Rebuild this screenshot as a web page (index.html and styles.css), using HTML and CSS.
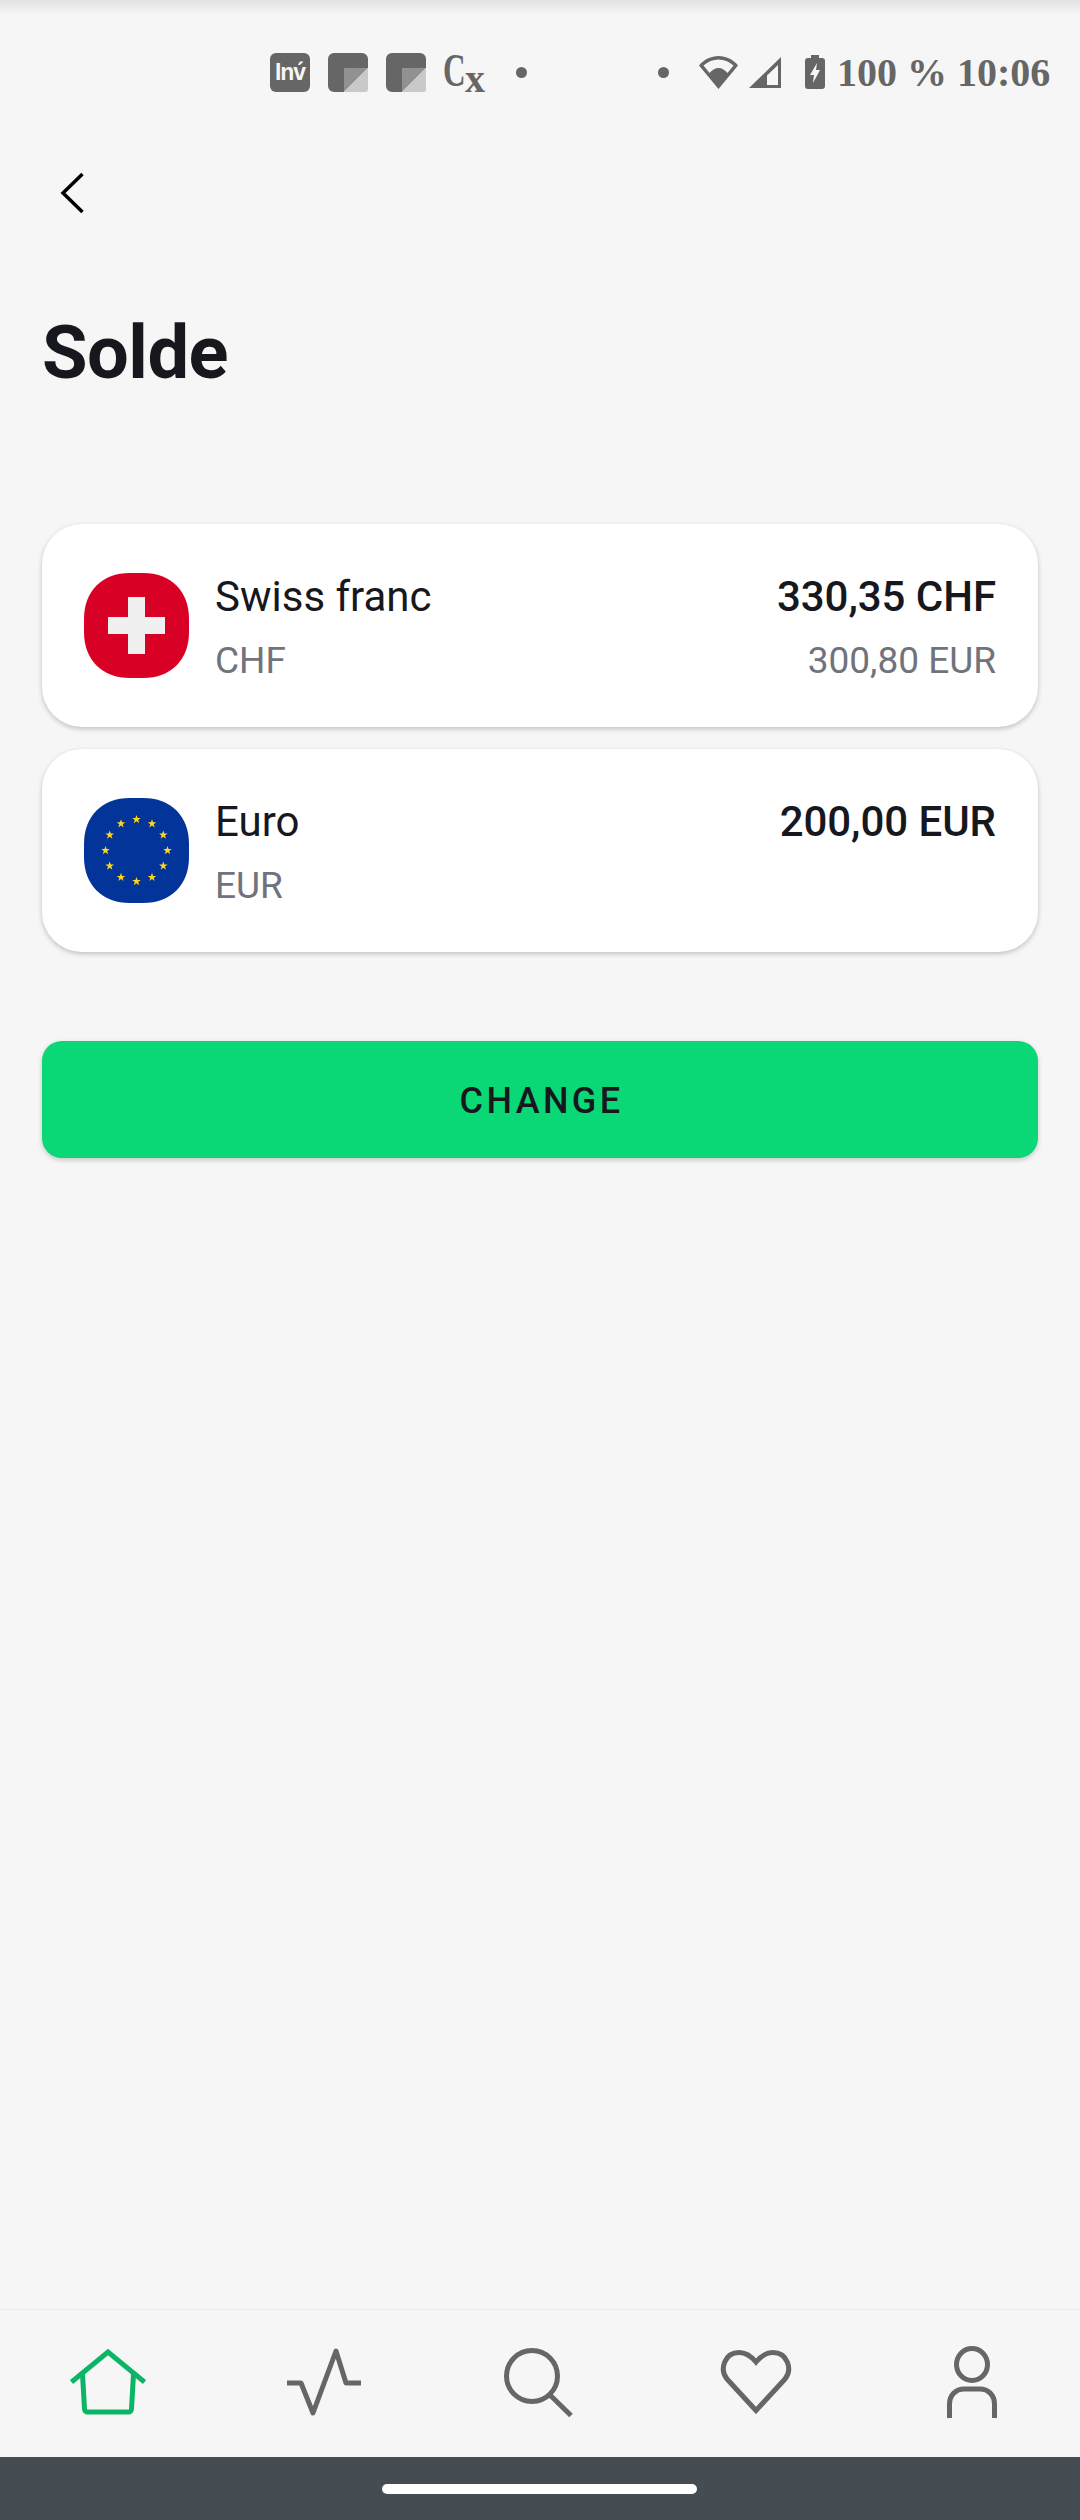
FILE: index.html

```html
<!DOCTYPE html>
<html lang="en">
<head>
<meta charset="UTF-8">
<title>Solde</title>
<meta name="viewport" content="width=device-width, initial-scale=1.0">
<link rel="stylesheet" href="styles.css">
</head>
<body>
<div class="page">
  <div class="statusbar">
    <svg class="note note-first" width="40" height="39" viewBox="0 0 40 39"><rect width="40" height="39" rx="6" fill="#666"/><text x="20" y="27" text-anchor="middle" class="inv-text">Inv́</text></svg>
    <svg class="note" width="40" height="39" viewBox="0 0 40 39"><path d="M6 0H34a6 6 0 0 1 6 6V15H19a3 3 0 0 0-3 3V39H6a6 6 0 0 1-6-6V6a6 6 0 0 1 6-6z" fill="#666"/><path d="M16 39V18a3 3 0 0 1 3-3H40L16 39z" fill="#919191"/><path d="M40 15V36a3 3 0 0 1-3 3H16z" fill="#c9c9c9"/></svg>
    <svg class="note" width="40" height="39" viewBox="0 0 40 39"><path d="M6 0H34a6 6 0 0 1 6 6V15H19a3 3 0 0 0-3 3V39H6a6 6 0 0 1-6-6V6a6 6 0 0 1 6-6z" fill="#666"/><path d="M16 39V18a3 3 0 0 1 3-3H40L16 39z" fill="#919191"/><path d="M40 15V36a3 3 0 0 1-3 3H16z" fill="#c9c9c9"/></svg>
    <span class="cx"><span class="cx-big">C</span><span class="cx-small">x</span></span>
    <span class="dot dot-left"></span>
    <span class="dot dot-right"></span>
    <svg class="wifi" width="39" height="33" viewBox="0 0 39 33"><path d="M19.500 33L0 9.500C5 3.500 12 0 19.500 0S34 3.500 39 9.500z" fill="#666"/><path d="M4.500 9.500C9 5.500 14 3.500 19.500 3.500S30 5.500 34.500 9.500L28.500 17C26 14 23 12 19.500 12S13 14 10.500 17z" fill="#f6f6f6"/></svg>
    <svg class="signal" width="32" height="31" viewBox="0 0 32 31"><path d="M32 0V31H0z" fill="#666"/><path d="M29 8V28H18V18.500z" fill="#f6f6f6"/></svg>
    <svg class="battery" width="20" height="34" viewBox="0 0 20 34"><path d="M6 0H14V3H17a3 3 0 0 1 3 3V31a3 3 0 0 1-3 3H3a3 3 0 0 1-3-3V6a3 3 0 0 1 3-3H6z" fill="#666"/><path d="M12 8L5 20H9L8 28L15 15H11z" fill="#f6f6f6"/></svg>
    <span class="status-text">100 % 10:06</span>
  </div>

  <div class="toolbar">
    <svg width="25" height="42" viewBox="0 0 25 42"><path d="M22.500 2L3 21L22.500 40" fill="none" stroke="#000" stroke-width="3.500"/></svg>
  </div>

  <div class="content">
    <h1>Solde</h1>

    <div class="card">
      <svg class="flag" width="105" height="105" viewBox="0 0 105 105">
        <path d="M46 0H59C87 0 105 18 105 46V59C105 87 87 105 59 105H46C18 105 0 87 0 59V46C0 18 18 0 46 0z" fill="#d90026"/>
        <path d="M44 24H61V44H81V61H61V81H44V61H24V44H44z" fill="#f0f0f0"/>
      </svg>
      <div class="names">
        <div class="name">Swiss franc</div>
        <div class="sub">CHF</div>
      </div>
      <div class="amounts">
        <div class="amount">330,35 CHF</div>
        <div class="sub">300,80 EUR</div>
      </div>
    </div>

    <div class="card">
      <svg class="flag" width="105" height="105" viewBox="0 0 105 105">
        <defs><polygon id="star" points="0,-4.500 1.100,-1.400 4.300,-1.400 1.700,.6 2.700,3.700 0,1.800 -2.700,3.700 -1.700,.6 -4.300,-1.400 -1.100,-1.400" fill="#ffd617"/></defs>
        <path d="M46 0H59C87 0 105 18 105 46V59C105 87 87 105 59 105H46C18 105 0 87 0 59V46C0 18 18 0 46 0z" fill="#02349a"/>
        <use href="#star" x="52.500" y="21.500"/>
        <use href="#star" x="68" y="25.700"/>
        <use href="#star" x="79.300" y="37"/>
        <use href="#star" x="83.500" y="52.500"/>
        <use href="#star" x="79.300" y="68"/>
        <use href="#star" x="68" y="79.300"/>
        <use href="#star" x="52.500" y="83.500"/>
        <use href="#star" x="37" y="79.300"/>
        <use href="#star" x="25.700" y="68"/>
        <use href="#star" x="21.500" y="52.500"/>
        <use href="#star" x="25.700" y="37"/>
        <use href="#star" x="37" y="25.700"/>
      </svg>
      <div class="names">
        <div class="name">Euro</div>
        <div class="sub">EUR</div>
      </div>
      <div class="amounts">
        <div class="amount">200,00 EUR</div>
      </div>
    </div>

    <button class="change">CHANGE</button>
  </div>

  <div class="tabbar">
    <div class="tab">
      <svg width="76" height="66" viewBox="0 0 76 66" fill="none" stroke="#0bb565" stroke-width="5"><path d="M1.500 33L38 3L74.500 33"/><path d="M12.500 25L14.500 60a3 3 0 0 0 3 3H58.500a3 3 0 0 0 3-3L63.500 25" stroke-linejoin="round"/></svg>
    </div>
    <div class="tab">
      <svg width="74" height="68" viewBox="0 0 74 68" fill="none" stroke="#666" stroke-width="5" stroke-linejoin="round"><path d="M0 35H14L26 65L49 3L59 35H74"/></svg>
    </div>
    <div class="tab">
      <svg class="search" width="69" height="69" viewBox="0 0 69 69" fill="none" stroke="#666" stroke-width="5"><circle cx="28" cy="28" r="25.500"/><path d="M46 47L67 67.500"/></svg>
    </div>
    <div class="tab">
      <svg width="72" height="64" viewBox="0 0 72 64" fill="none" stroke="#666" stroke-width="5"><path d="M36 60.500L7 29C-1 19 5 2.500 19 2.500C26 2.500 31 6 36 12C41 6 46 2.500 53 2.500C67 2.500 73 19 65 29z"/></svg>
    </div>
    <div class="tab">
      <svg width="50" height="72" viewBox="0 0 50 72" fill="none" stroke="#666" stroke-width="5"><ellipse cx="25" cy="18.500" rx="15.500" ry="16"/><path d="M2.500 72V58C2.500 49 9 43 17 43H33C41 43 47.500 49 47.500 58V72"/></svg>
    </div>
  </div>
  <div class="navbar"><div class="home-pill"></div></div>
</div>
</body>
</html>
```

FILE: styles.css

```css
*{box-sizing:border-box}
body{margin:0;background:#f6f6f6;font-family:Roboto,"Noto Sans",sans-serif;color:#16181d}
.page{width:1080px;height:2520px;display:flex;flex-direction:column}

.statusbar{height:110px;flex:none;display:flex;align-items:center;padding:34px 29px 0 270px;color:#666;background:linear-gradient(#e2e2e2,#f6f6f6 14px)}
.note{margin-right:18px;flex:none}
.inv-text{font-family:"Liberation Sans",sans-serif;font-weight:bold;font-size:23px;letter-spacing:-1px;fill:#f6f6f6}
.cx{font-family:"Liberation Serif",serif;width:41px;margin-left:-1px;display:flex;align-items:baseline}
.cx-big{display:inline-block;width:22px;font-size:46px;font-weight:bold;line-height:40px;transform:scaleX(.68);transform-origin:left}
.cx-small{font-size:40px;font-weight:bold;line-height:40px;position:relative;top:6px}
.dot{width:11px;height:11px;border-radius:50%;background:#666;flex:none}
.dot-left{margin-left:32px}
.dot-right{margin-left:131px}
.wifi{margin-left:30px;flex:none}
.signal{margin-left:11px;flex:none}
.battery{margin-left:24px;flex:none}
.status-text{font-family:"Liberation Serif",serif;font-weight:bold;font-size:40px;margin-left:12px;white-space:nowrap}

.toolbar{height:199px;flex:none;padding:62px 0 0 60px}
.toolbar svg{display:block}

.content{flex:1;padding:0 42px}
h1{margin:0 0 127px;font-size:74px;line-height:88px;font-weight:700;letter-spacing:-.5px}

.card{height:203px;background:#fff;border-radius:40px;margin-bottom:22px;padding:0 42px;display:flex;align-items:center;box-shadow:0 2px 5px rgba(0,0,0,.22)}
.flag{flex:none;margin-right:26px}
.names{flex:1}
.amounts{text-align:right;align-self:flex-start;padding-top:47px}
.names{align-self:flex-start;padding-top:47px}
.name,.amount{font-size:42px;line-height:52px;height:52px}
.amount{font-weight:500;letter-spacing:-.05px}
.sub{font-size:37px;line-height:52px;margin-top:12px;color:#70737c}

.change{display:block;width:100%;height:117px;margin-top:89px;padding:3px 0 0 3px;border:none;border-radius:20px;background:#0ad877;color:#16181d;font-family:Roboto,sans-serif;font-size:36px;font-weight:500;letter-spacing:3.4px;box-shadow:0 2px 5px rgba(0,0,0,.2)}

.tabbar{height:148px;flex:none;display:grid;grid-template-columns:repeat(5,1fr);align-items:start;padding-top:36px;border-top:1px solid #ececec}
.tab{display:flex;justify-content:center;height:72px;align-items:center}
.search{margin-right:3px}
.navbar{height:63px;flex:none;background:#454c52;padding-top:27px}
.home-pill{width:315px;height:10px;margin-left:382px;border-radius:5px;background:#fff}
```
